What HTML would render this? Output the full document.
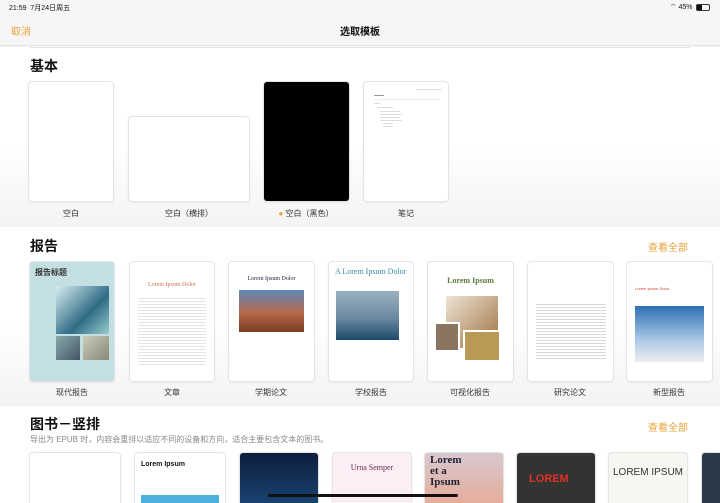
<!DOCTYPE html>
<html><head><meta charset="utf-8"><style>
*{margin:0;padding:0;box-sizing:border-box}
html,body{width:720px;height:503px;overflow:hidden}
body{background:#f4f4f4;font-family:"Liberation Sans","Noto Sans CJK SC",sans-serif;position:relative;color:#111}
.a{position:absolute}
.card{position:absolute;background:#fff;border-radius:3px;box-shadow:0 0 0 1px #e4e4e4,0 1px 3px rgba(0,0,0,.10);overflow:hidden}
.lbl{position:absolute;font-size:8px;color:#333;text-align:center;width:100px}
.sec{position:absolute;left:0;width:720px;background:linear-gradient(#fff 0%,#fff 55%,#f3f3f3 100%)}
.h{position:absolute;left:30px;font-size:14px;font-weight:bold}
.more{position:absolute;left:648px;font-size:10px;color:#e8a33a}
.ln{position:absolute;height:1px;background:#ddd}
</style></head><body>
<div class="a" style="left:0;top:0;width:720px;height:46px;background:#f6f6f6;border-bottom:1px solid #e4e4e4"></div>
<div class="a" style="left:9px;top:3px;font-size:7px">21:59&nbsp; 7月24日周五</div>
<div class="a" style="left:670px;top:3px;font-size:7px">⌔ 45%</div>
<div class="a" style="left:696px;top:4px;width:14px;height:7px;border:1px solid #333;border-radius:2px"><div style="width:5px;height:5px;background:#111"></div></div>
<div class="a" style="left:11px;top:23px;font-size:10px;color:#e8a33a">取消</div>
<div class="a" style="left:0;width:720px;top:23px;font-size:10px;text-align:center;font-weight:bold">选取模板</div>

<div class="sec" style="top:47px;height:180px"></div>
<div class="a" style="left:30px;top:47px;width:660px;height:1px;background:#e6e6e6"></div>
<div class="h" style="top:56px">基本</div>
<div class="card" style="left:29px;top:82px;width:84px;height:119px"></div>
<div class="card" style="left:129px;top:117px;width:120px;height:84px"></div>
<div class="card" style="left:264px;top:82px;width:85px;height:119px;background:#000"></div>
<div class="card" style="left:364px;top:82px;width:84px;height:119px">
<div class="ln" style="left:52px;top:7px;width:26px"></div>
<div class="ln" style="left:10px;top:13px;width:10px;background:#999"></div>
<div class="ln" style="left:10px;top:17px;width:66px;background:#eee"></div>
<div class="ln" style="left:10px;top:21px;width:6px"></div>
<div class="ln" style="left:13px;top:25px;width:16px"></div>
<div class="ln" style="left:16px;top:29px;width:20px"></div>
<div class="ln" style="left:16px;top:32px;width:22px"></div>
<div class="ln" style="left:16px;top:35px;width:20px"></div>
<div class="ln" style="left:16px;top:38px;width:22px"></div>
<div class="ln" style="left:19px;top:41px;width:10px"></div>
<div class="ln" style="left:19px;top:44px;width:10px"></div>
</div>
<div class="lbl" style="left:21px;top:208px">空白</div>
<div class="lbl" style="left:139px;top:208px">空白（横排）</div>
<div class="lbl" style="left:256px;top:208px"><span style="color:#e8a33a">●</span> 空白（黑色）</div>
<div class="lbl" style="left:356px;top:208px">笔记</div>

<div class="sec" style="top:227px;height:178px"></div>
<div class="h" style="top:236px">报告</div>
<div class="more" style="top:239px">查看全部</div>
<div class="card" style="left:30px;top:262px;width:84px;height:119px;background:#c3dfe2">
<div class="a" style="left:5px;top:5px;font-size:8px;font-weight:bold;color:#333">报告标题</div>
<div class="a" style="left:26px;top:24px;width:53px;height:48px;background:linear-gradient(135deg,#d8ecf2,#2f6c86 60%,#9cc)"></div>
<div class="a" style="left:26px;top:74px;width:24px;height:24px;background:linear-gradient(135deg,#8aa,#456)"></div>
<div class="a" style="left:53px;top:74px;width:26px;height:24px;background:linear-gradient(135deg,#ccb,#887)"></div>
</div>
<div class="card" style="left:130px;top:262px;width:84px;height:119px">
<div class="a" style="left:0;width:84px;top:20px;font-size:6px;color:#d07050;text-align:center;font-family:'Liberation Serif',serif">Lorem Ipsum Dolor</div>
<div class="a" style="left:8px;top:34px;width:68px;height:70px;background:repeating-linear-gradient(#fff 0 2px,#e4e4e4 2px 3px)"></div>
</div>
<div class="card" style="left:229px;top:262px;width:85px;height:119px">
<div class="a" style="left:0;width:85px;top:14px;font-size:6px;color:#224;text-align:center;font-family:'Liberation Serif',serif">Lorem Ipsum Dolor</div>
<div class="a" style="left:10px;top:28px;width:65px;height:42px;background:linear-gradient(#5c88b8,#b8684a 55%,#7a3d22)"></div>
</div>
<div class="card" style="left:329px;top:262px;width:84px;height:119px">
<div class="a" style="left:6px;top:5px;font-size:8px;color:#3a8aa8;font-family:'Liberation Serif',serif">A Lorem Ipsum Dolor</div>
<div class="a" style="left:7px;top:29px;width:63px;height:49px;background:linear-gradient(#9ab0c0,#6a8aa0 55%,#1d4a6a)"></div>
</div>
<div class="card" style="left:428px;top:262px;width:85px;height:119px">
<div class="a" style="left:0;width:85px;top:14px;font-size:8px;font-weight:bold;color:#5b7a45;text-align:center;font-family:'Liberation Serif',serif">Lorem Ipsum</div>
<div class="a" style="left:18px;top:34px;width:52px;height:52px;background:linear-gradient(135deg,#ece4d4,#a07040)"></div>
<div class="a" style="left:6px;top:60px;width:26px;height:30px;background:#8a7560;border:2px solid #fff"></div>
<div class="a" style="left:35px;top:68px;width:38px;height:32px;background:#b89a55;border:2px solid #fff"></div>
</div>
<div class="card" style="left:528px;top:262px;width:85px;height:119px">
<div class="a" style="left:8px;top:40px;width:70px;height:58px;background:repeating-linear-gradient(#fff 0 2px,#d8d8d8 2px 3px)"></div>
</div>
<div class="card" style="left:627px;top:262px;width:85px;height:119px">
<div class="a" style="left:8px;top:24px;font-size:4px;color:#d04030">Lorem Ipsum Dolor</div>
<div class="a" style="left:8px;top:44px;width:69px;height:56px;background:linear-gradient(#2f6fb5,#a9c8e6 60%,#eee)"></div>
</div>
<div class="lbl" style="left:22px;top:387px">现代报告</div>
<div class="lbl" style="left:122px;top:387px">文章</div>
<div class="lbl" style="left:221px;top:387px">学期论文</div>
<div class="lbl" style="left:321px;top:387px">学校报告</div>
<div class="lbl" style="left:420px;top:387px">可视化报告</div>
<div class="lbl" style="left:520px;top:387px">研究论文</div>
<div class="lbl" style="left:619px;top:387px">新型报告</div>

<div class="sec" style="top:406px;height:97px;background:#fff"></div>
<div class="h" style="top:414px">图书－竖排</div>
<div class="a" style="left:30px;top:434px;font-size:8px;color:#888">导出为 EPUB 时，内容会重排以适应不同的设备和方向，适合主要包含文本的图书。</div>
<div class="more" style="top:419px">查看全部</div>
<div class="card" style="left:30px;top:453px;width:90px;height:60px"></div>
<div class="card" style="left:135px;top:453px;width:90px;height:60px"><div class="a" style="left:6px;top:8px;font-size:7px;font-weight:bold">Lorem Ipsum</div><div class="a" style="left:6px;top:42px;width:78px;height:20px;background:#4bb0e0"></div></div>
<div class="card" style="left:240px;top:453px;width:78px;height:60px;background:linear-gradient(#0d1d3d,#1a4a7a)"></div>
<div class="card" style="left:333px;top:453px;width:78px;height:60px;background:#fbeef4"><div class="a" style="left:0;width:78px;top:10px;font-size:8px;color:#6a2a4a;text-align:center;font-family:'Liberation Serif',serif">Urna Semper</div></div>
<div class="card" style="left:425px;top:453px;width:78px;height:60px;background:linear-gradient(#d8c8d0,#e8a890)"><div class="a" style="left:5px;top:2px;font-size:11px;font-weight:bold;line-height:11px;color:#223;font-family:'Liberation Serif',serif">Lorem<br>et a<br>Ipsum</div></div>
<div class="card" style="left:517px;top:453px;width:78px;height:60px;background:#333"><div class="a" style="left:12px;top:20px;font-size:11px;font-weight:bold;color:#e03020">LOREM</div></div>
<div class="card" style="left:609px;top:453px;width:78px;height:60px;background:#f4f8f0"><div class="a" style="left:0;width:78px;top:14px;font-size:10px;text-align:center;color:#333">LOREM IPSUM</div></div>
<div class="card" style="left:702px;top:453px;width:30px;height:60px;background:#2a3a4a"></div>
<div class="a" style="left:268px;top:494px;width:190px;height:3px;background:#111;border-radius:2px"></div>
</body></html>
